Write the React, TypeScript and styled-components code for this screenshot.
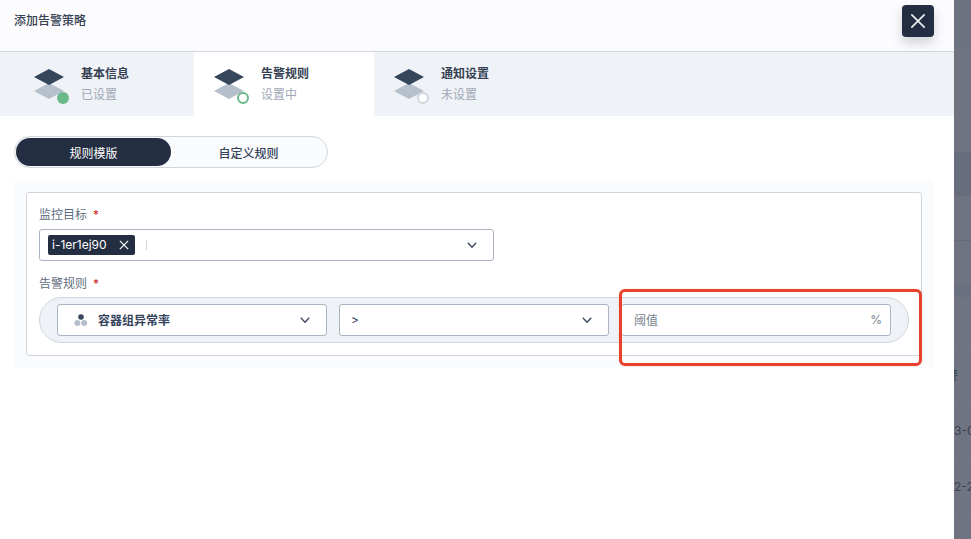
import React from "react";
import styled, { createGlobalStyle } from "styled-components";

const Global = createGlobalStyle`
  html, body { margin: 0; padding: 0; width: 971px; height: 539px; overflow: hidden; }
  body { font-family: "Inter", "Noto Sans CJK SC", "Noto Sans", sans-serif; }
  * { box-sizing: border-box; }
`;

const Page = styled.div`
  position: relative;
  width: 971px;
  height: 539px;
  display: flex;
  overflow: hidden;
`;

const Modal = styled.main`
  width: 954px;
  height: 539px;
  background: #fff;
  flex: none;
`;

const Backdrop = styled.aside`
  flex: 1;
  display: flex;
  flex-direction: column;
  background: #6f7480;
  overflow: hidden;
`;

const BackRow = styled.div<{ $h: number; $tone?: string; $line?: string }>`
  height: ${(p) => p.$h}px;
  flex: none;
  background: ${(p) => p.$tone || "#6f7480"};
  border-bottom: 1px solid ${(p) => p.$line || "#737884"};
  display: flex;
  align-items: center;
  font-size: 12px;
  color: #3c4254;
  white-space: nowrap;
`;

const ClippedText = styled.span`
  margin-left: -8px;
  margin-top: -4px;
`;

const Header = styled.header`
  height: 52px;
  background: #fcfcfe;
  border-bottom: 1px solid #d1d5de;
  padding: 13px 14px 0;
  font-size: 12px;
  line-height: 16px;
  font-weight: 500;
  color: #343f52;
`;

const CloseButton = styled.button`
  position: absolute;
  left: 902px;
  top: 5px;
  width: 32px;
  height: 32px;
  padding: 0;
  border: 0;
  border-radius: 4px;
  background: #242e42;
  box-shadow: 0 6px 12px rgba(36, 46, 66, 0.2);
  display: flex;
  align-items: center;
  justify-content: center;
`;

const Steps = styled.nav`
  height: 64px;
  display: flex;
  background: #eff2f7;
`;

const Step = styled.div<{ $active?: boolean; $w: number; $pad: number }>`
  width: ${(p) => p.$w}px;
  flex: none;
  padding: 16px 0 0 ${(p) => p.$pad}px;
  display: flex;
  gap: 12px;
  background: ${(p) => (p.$active ? "#fff" : "transparent")};
`;

const StepIcon = styled.svg`
  width: 36px;
  height: 36px;
  flex: none;
`;

const StepText = styled.div`
  display: flex;
  flex-direction: column;
  gap: 5px;
`;

const StepTitle = styled.div`
  font-size: 12px;
  line-height: 16px;
  font-weight: 600;
  color: #343f52;
  margin-top: -2px;
`;

const StepStatus = styled.div`
  font-size: 12px;
  line-height: 16px;
  color: #a0a7b6;
`;

const Content = styled.div`
  padding: 20px 20px 0 14px;
`;

const Switcher = styled.div`
  width: 314px;
  height: 32px;
  padding: 1px;
  border: 1px solid #d1d5de;
  border-radius: 16px;
  background: #fafbfd;
  display: flex;
`;

const SwitchItem = styled.div<{ $active?: boolean }>`
  flex: 1;
  border-radius: 14px;
  background: ${(p) => (p.$active ? "#242e42" : "transparent")};
  color: ${(p) => (p.$active ? "#fff" : "#36435c")};
  font-size: 12px;
  font-weight: ${(p) => (p.$active ? 400 : 500)};
  display: flex;
  align-items: center;
  justify-content: center;
`;

const Panel = styled.section`
  margin-top: 12px;
  width: 920px;
  height: 188px;
  padding: 12px;
  background: #f9fbfd;
  border-radius: 4px;
`;

const Box = styled.div`
  height: 164px;
  padding: 12px;
  background: #fff;
  border: 1px solid #d1d5de;
  border-radius: 3px;
`;

const FieldLabel = styled.div`
  height: 24px;
  font-size: 12px;
  line-height: 20px;
  color: #5f6b80;
  display: flex;
  gap: 6px;
`;

const Star = styled.span`
  color: #ca2621;
  font-size: 12px;
`;

const Select = styled.div<{ $w: number }>`
  width: ${(p) => p.$w}px;
  height: 32px;
  flex: none;
  padding-bottom: 1px;
  background: #fff;
  border: 1px solid #abb4c2;
  border-radius: 3px;
  display: flex;
  align-items: center;
  font-size: 12px;
  color: #36435c;
`;

const Tag = styled.div`
  margin-left: 8px;
  height: 20px;
  width: 87px;
  flex: none;
  padding: 0 6px 0 4px;
  border-radius: 2px;
  background: #242e42;
  color: #fff;
  font-size: 12px;
  line-height: 19px;
  display: flex;
  align-items: center;
  justify-content: space-between;
`;

const Caret = styled.span`
  width: 1px;
  height: 10px;
  margin-left: 11px;
  background: #d1d5de;
`;

const Push = styled.span`
  margin-left: auto;
  margin-right: 16px;
  margin-top: 1px;
  display: flex;
`;

const RuleLabel = styled(FieldLabel)`
  margin-top: 13px;
  height: 23px;
`;

const RulePill = styled.div`
  width: 870px;
  height: 46px;
  padding: 6px 17px;
  border: 1px solid #d1d5de;
  border-radius: 23px;
  background: #eff2f7;
  display: flex;
  gap: 12px;
`;

const MetricIcon = styled.svg`
  width: 14px;
  height: 14px;
  margin-left: 16px;
  flex: none;
`;

const MetricName = styled.span`
  margin-left: 10px;
  font-weight: 600;
  color: #36435c;
`;

const CompareValue = styled.span`
  margin-left: 11px;
`;

const Placeholder = styled.span`
  margin-left: 12px;
  color: #79818f;
`;

const Unit = styled.span`
  margin-left: auto;
  margin-right: 8px;
  color: #79818f;
`;

const Highlight = styled.div`
  position: absolute;
  left: 619px;
  top: 289px;
  width: 303px;
  height: 77px;
  border: 3px solid #e8412c;
  border-radius: 6px;
  box-shadow: 0 0 1px rgba(232, 65, 44, 0.6);
  pointer-events: none;
`;

const Chevron = () => (
  <svg width="10" height="7" viewBox="0 0 10 7" fill="none">
    <path d="M.8.8 5 5.2 9.2.8" stroke="#36435c" strokeWidth="1.3" />
  </svg>
);

const Cross = ({ size, width, color }: { size: number; width: number; color: string }) => (
  <svg width={size} height={size} viewBox="0 0 12 12" fill="none">
    <path d="M1 1l10 10M11 1 1 11" stroke={color} strokeWidth={width} />
  </svg>
);

const StackIcon = ({ state }: { state: "done" | "doing" | "todo" }) => (
  <StepIcon viewBox="0 0 36 36">
    <path d="M16 15 31 23 16 31 1 23Z" fill="#b6c0ca" />
    <path d="M16 1 31 9 16 17 1 9Z" fill="#36475c" />
    {state === "done" && <circle cx="30" cy="30" r="6" fill="#6ab98a" />}
    {state === "doing" && <circle cx="30" cy="30" r="5" fill="#fff" stroke="#6ab98a" strokeWidth="2" />}
    {state === "todo" && <circle cx="30" cy="30" r="5" fill="#fff" stroke="#d1d5de" strokeWidth="2" />}
  </StepIcon>
);

export default function App() {
  return (
    <Page>
      <Global />
      <Modal>
        <Header>添加告警策略</Header>
        <Steps>
          <Step $w={194} $pad={33}>
            <StackIcon state="done" />
            <StepText>
              <StepTitle>基本信息</StepTitle>
              <StepStatus>已设置</StepStatus>
            </StepText>
          </Step>
          <Step $w={180} $pad={19} $active>
            <StackIcon state="doing" />
            <StepText>
              <StepTitle>告警规则</StepTitle>
              <StepStatus>设置中</StepStatus>
            </StepText>
          </Step>
          <Step $w={180} $pad={19}>
            <StackIcon state="todo" />
            <StepText>
              <StepTitle>通知设置</StepTitle>
              <StepStatus>未设置</StepStatus>
            </StepText>
          </Step>
        </Steps>
        <Content>
          <Switcher>
            <SwitchItem $active>规则模版</SwitchItem>
            <SwitchItem>自定义规则</SwitchItem>
          </Switcher>
          <Panel>
            <Box>
              <FieldLabel>
                监控目标 <Star>*</Star>
              </FieldLabel>
              <Select $w={455}>
                <Tag>
                  i-1er1ej90
                  <Cross size={10} width={1.4} color="#fff" />
                </Tag>
                <Caret />
                <Push>
                  <Chevron />
                </Push>
              </Select>
              <RuleLabel>
                告警规则 <Star>*</Star>
              </RuleLabel>
              <RulePill>
                <Select $w={270}>
                  <MetricIcon viewBox="0 0 14 14">
                    <circle cx="7" cy="4" r="2.8" fill="#36475c" />
                    <circle cx="3.4" cy="10" r="3" fill="#b6c0ca" />
                    <circle cx="10.2" cy="10" r="3" fill="#b6c0ca" />
                  </MetricIcon>
                  <MetricName>容器组异常率</MetricName>
                  <Push>
                    <Chevron />
                  </Push>
                </Select>
                <Select $w={270}>
                  <CompareValue>&gt;</CompareValue>
                  <Push>
                    <Chevron />
                  </Push>
                </Select>
                <Select $w={270}>
                  <Placeholder>阈值</Placeholder>
                  <Unit>%</Unit>
                </Select>
              </RulePill>
            </Box>
          </Panel>
        </Content>
      </Modal>
      <Backdrop>
        <BackRow $h={47} $tone="#6c7280" $line="#6c7280" />
        <BackRow $h={105} $line="#6f7480" />
        <BackRow $h={45} $tone="#676d7d" $line="#6b7180" />
        <BackRow $h={44} $line="#646a78" />
        <BackRow $h={45} $line="#6a7080" />
        <BackRow $h={11} $tone="#6a7080" $line="#6a7080" />
        <BackRow $h={53} />
        <BackRow $h={53}>
          <ClippedText>警</ClippedText>
        </BackRow>
        <BackRow $h={56}>3-0</BackRow>
        <BackRow $h={56}>2-2</BackRow>
      </Backdrop>
      <CloseButton aria-label="关闭">
        <Cross size={16} width={1.2} color="#eef0f4" />
      </CloseButton>
      <Highlight />
    </Page>
  );
}
